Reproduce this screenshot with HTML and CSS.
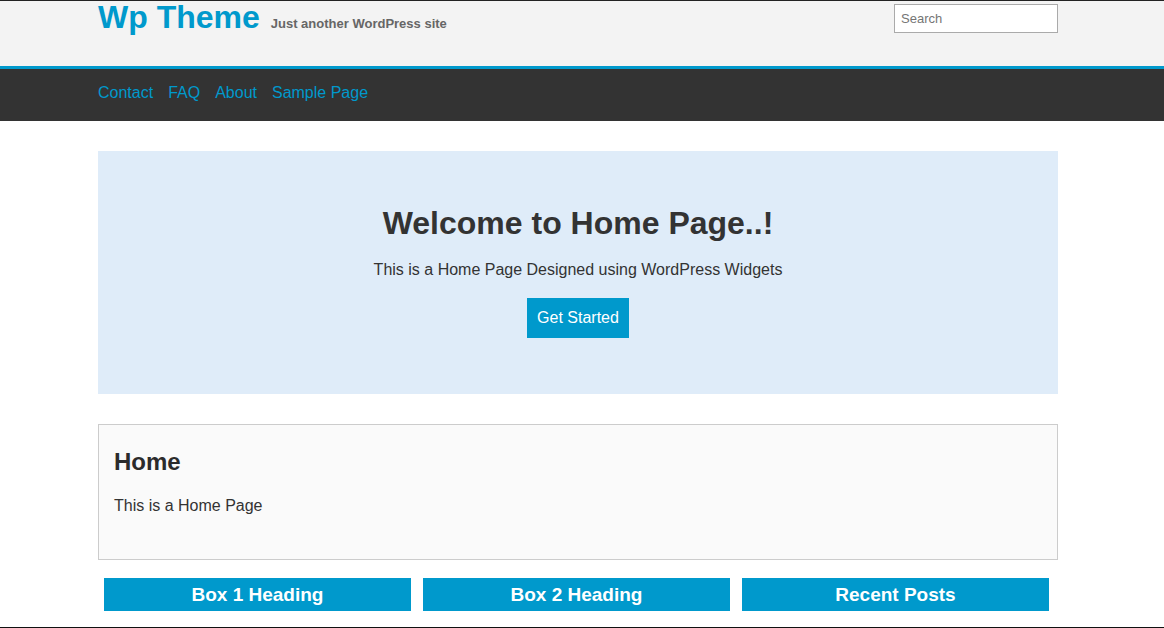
FILE: index.html
```html
<!DOCTYPE html>
<html lang="en">
<head>
<meta charset="utf-8">
<title>Wp Theme</title>
<link rel="stylesheet" href="styles.css">
</head>
<body>
<header class="site-header">
  <div class="container header-inner">
    <div class="branding">
      <a class="site-title" href="#">Wp Theme</a>
      <span class="site-desc">Just another WordPress site</span>
    </div>
    <input class="search" type="text" placeholder="Search">
  </div>
</header>
<nav class="site-nav">
  <div class="container nav-inner">
    <a href="#">Contact</a>
    <a href="#">FAQ</a>
    <a href="#">About</a>
    <a href="#">Sample Page</a>
  </div>
</nav>
<main class="container">
  <section class="hero">
    <h1 class="hero-title">Welcome to Home Page..!</h1>
    <p class="hero-text">This is a Home Page Designed using WordPress Widgets</p>
    <a class="btn" href="#">Get Started</a>
  </section>
  <article class="page-box">
    <h2 class="page-title">Home</h2>
    <p class="page-text">This is a Home Page</p>
  </article>
  <section class="boxes">
    <div class="box"><h3 class="box-heading">Box 1 Heading</h3></div>
    <div class="box"><h3 class="box-heading">Box 2 Heading</h3></div>
    <div class="box"><h3 class="box-heading">Recent Posts</h3></div>
  </section>
</main>
<div class="frame-bottom"></div>
</body>
</html>
```
FILE: styles.css
```css
* { box-sizing: border-box; }
html, body { margin: 0; padding: 0; }
body {
  font-family: "Liberation Sans", Arial, sans-serif;
  font-size: 16px;
  color: #333;
  background: #fff;
}
a { text-decoration: none; }
.container {
  width: 960px;
  margin-left: calc(50% - 484px);
}
.site-header {
  background: #f3f3f3;
  border-top: 1px solid #222;
  border-bottom: 3px solid #0099cc;
  height: 69px;
}
.header-inner {
  display: flex;
  justify-content: space-between;
  align-items: flex-start;
}
.branding {
  display: flex;
  align-items: baseline;
  gap: 11px;
}
.site-title {
  font-size: 32px;
  font-weight: bold;
  line-height: 32px;
  color: #0099cc;
}
.site-desc {
  font-size: 13px;
  font-weight: bold;
  color: #666;
}
.search {
  margin-top: 3px;
  width: 164px;
  height: 29px;
  border: 1px solid #aaa;
  background: #fff;
  padding: 0 6px;
  font-family: "Liberation Sans", Arial, sans-serif;
  font-size: 13px;
  color: #333;
  outline: none;
}
.search::placeholder { color: #757575; }
.site-nav {
  background: #333;
  height: 52px;
}
.nav-inner {
  display: flex;
  gap: 15px;
  padding-top: 13px;
  line-height: 22px;
}
.nav-inner a {
  color: #0099cc;
  font-size: 16px;
}
.hero {
  margin-top: 30px;
  background: #dfecf9;
  height: 243px;
  padding-top: 54px;
  text-align: center;
}
.hero-title {
  margin: 0;
  font-size: 32px;
  line-height: 37px;
  font-weight: bold;
  color: #333;
}
.hero-text {
  margin: 16px 0 0;
  line-height: 24px;
}
.btn {
  display: inline-block;
  margin-top: 16px;
  background: #0099cc;
  color: #fff;
  padding: 10px 10px;
  line-height: 20px;
  font-size: 16px;
}
.page-box {
  margin-top: 30px;
  background: #fafafa;
  border: 1px solid #ccc;
  height: 136px;
  padding: 22px 15px 0;
}
.page-title {
  margin: 0;
  font-size: 24px;
  line-height: 30px;
  font-weight: bold;
  color: #2b2b2b;
}
.page-text {
  margin: 17px 0 0;
  line-height: 24px;
}
.boxes {
  margin-top: 18px;
  padding-left: 6px;
  display: grid;
  grid-template-columns: 307px 307px 307px;
  column-gap: 12px;
}
.box-heading {
  margin: 0;
  background: #0099cc;
  color: #fff;
  text-align: center;
  font-size: 19px;
  line-height: 33px;
  height: 33px;
  font-weight: bold;
}
.frame-bottom {
  position: fixed;
  left: 0;
  right: 0;
  bottom: 0;
  height: 1px;
  background: #111;
}
```
